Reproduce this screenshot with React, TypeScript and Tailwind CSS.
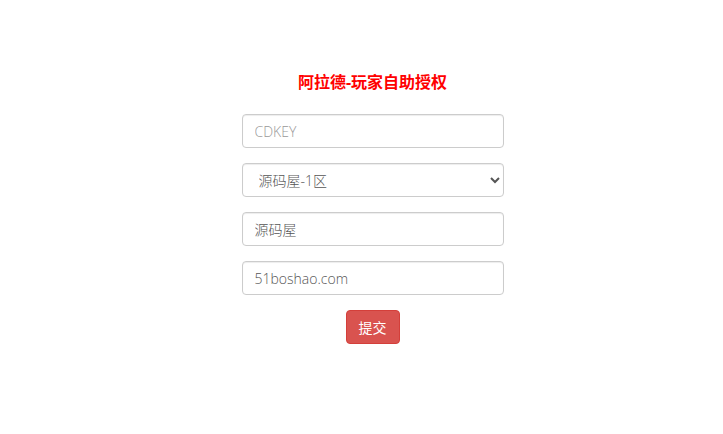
import React from "react";

export default function App() {
  const font = { fontFamily: '"Open Sans", "Noto Sans CJK SC", sans-serif' };
  const inputCls =
    "block w-full h-[34px] px-3 text-[14px] text-[#555] bg-white border border-[#ccc] rounded-[4px] shadow-[inset_0_1px_1px_rgba(0,0,0,0.075)] outline-none placeholder:text-[#999] font-light";
  return (
    <div className="w-full min-h-[434px] bg-white flex justify-center pl-[22px] pt-[71px]" style={font}>
      <div className="w-[262px] flex flex-col">
        <h1 className="h-[22px] leading-[22px] text-center text-[16px] font-bold text-[#f00]">
          阿拉德-玩家自助授权
        </h1>
        <div className="mt-[21px] flex flex-col gap-[15px]">
          <input className={inputCls} placeholder="CDKEY" />
          <select className={inputCls + " pl-[12px]"} defaultValue="1">
            <option value="1">源码屋-1区</option>
          </select>
          <input className={inputCls} defaultValue="源码屋" />
          <input className={inputCls} defaultValue="51boshao.com" />
          <div className="flex justify-center">
            <button className="h-[34px] w-[54px] text-[14px] text-white bg-[#d9534f] border border-[#d43f3a] rounded-[4px]">
              提交
            </button>
          </div>
        </div>
      </div>
    </div>
  );
}
